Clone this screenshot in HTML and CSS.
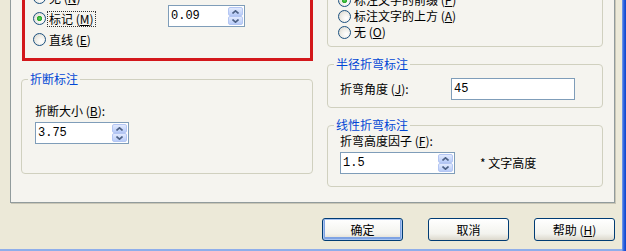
FILE: index.html
```html
<!DOCTYPE html>
<html lang="zh-CN">
<head>
<meta charset="utf-8">
<title>修改标注样式</title>
<link rel="stylesheet" href="styles.css">
</head>
<body>
<div class="window">
  <div class="client">
    <div class="panel">
      <div class="col col-left">
        <div class="redbox">
          <div class="radios">
            <div class="radio-row"><span class="radio"></span><span class="rlabel">无 (<u>N</u>)</span></div>
            <div class="radio-row"><span class="radio checked"></span><span class="rlabel focus">标记 (<u>M</u>)</span></div>
            <div class="radio-row"><span class="radio"></span><span class="rlabel">直线 (<u>E</u>)</span></div>
          </div>
          <div class="spin spin-mark">
            <span class="val">0.09</span>
            <span class="arrows">
              <span class="arr"><svg width="7" height="4" viewBox="0 0 7 4"><path d="M0.5 3.5 L3.5 0.8 L6.5 3.5" fill="none" stroke="#4D6185" stroke-width="1.6"/></svg></span>
              <span class="arr"><svg width="7" height="4" viewBox="0 0 7 4"><path d="M0.5 0.5 L3.5 3.2 L6.5 0.5" fill="none" stroke="#4D6185" stroke-width="1.6"/></svg></span>
            </span>
          </div>
        </div>
        <fieldset class="group group-break">
          <legend>折断标注</legend>
          <div class="gbody gbody-break">
            <div class="label">折断大小 (<u>B</u>):</div>
            <div class="spin spin-break">
              <span class="val">3.75</span>
              <span class="arrows">
                <span class="arr"><svg width="7" height="4" viewBox="0 0 7 4"><path d="M0.5 3.5 L3.5 0.8 L6.5 3.5" fill="none" stroke="#4D6185" stroke-width="1.6"/></svg></span>
                <span class="arr"><svg width="7" height="4" viewBox="0 0 7 4"><path d="M0.5 0.5 L3.5 3.2 L6.5 0.5" fill="none" stroke="#4D6185" stroke-width="1.6"/></svg></span>
              </span>
            </div>
          </div>
        </fieldset>
      </div>
      <div class="col col-right">
        <fieldset class="group group-arc">
          <legend>弧长符号</legend>
          <div class="gbody gbody-arc">
            <div class="radio-row small"><span class="radio checked"></span><span class="rlabel">标注文字的前缀 (<u>P</u>)</span></div>
            <div class="radio-row small"><span class="radio"></span><span class="rlabel">标注文字的上方 (<u>A</u>)</span></div>
            <div class="radio-row small"><span class="radio"></span><span class="rlabel">无 (<u>O</u>)</span></div>
          </div>
        </fieldset>
        <fieldset class="group group-radius">
          <legend>半径折弯标注</legend>
          <div class="gbody gbody-radius">
            <div class="label label-angle">折弯角度 (<u>J</u>):</div>
            <div class="textbox">45</div>
          </div>
        </fieldset>
        <fieldset class="group group-linear">
          <legend>线性折弯标注</legend>
          <div class="gbody gbody-linear">
            <div class="label">折弯高度因子 (<u>F</u>):</div>
            <div class="linear-row">
              <div class="spin spin-linear">
                <span class="val">1.5</span>
                <span class="arrows">
                  <span class="arr"><svg width="7" height="4" viewBox="0 0 7 4"><path d="M0.5 3.5 L3.5 0.8 L6.5 3.5" fill="none" stroke="#4D6185" stroke-width="1.6"/></svg></span>
                  <span class="arr"><svg width="7" height="4" viewBox="0 0 7 4"><path d="M0.5 0.5 L3.5 3.2 L6.5 0.5" fill="none" stroke="#4D6185" stroke-width="1.6"/></svg></span>
                </span>
              </div>
              <span class="unit">* 文字高度</span>
            </div>
          </div>
        </fieldset>
      </div>
    </div>
    <div class="buttons">
      <button class="btn default">确定</button>
      <button class="btn">取消</button>
      <button class="btn">帮助 (<u>H</u>)</button>
    </div>
  </div>
  <div class="frame-right"></div>
</div>
</body>
</html>
```

FILE: styles.css
```css
* { box-sizing: border-box; }
html, body { margin: 0; padding: 0; }
body {
  width: 626px;
  height: 251px;
  overflow: hidden;
  background: #ECE9D8;
  font-family: "Noto Sans CJK SC", "Liberation Sans", sans-serif;
  font-size: 12px;
  line-height: 14px;
  color: #000;
}
u { text-decoration: underline; text-underline-offset: 1px; }

.window { display: flex; width: 626px; height: 251px; }
.client {
  flex: 1;
  display: flex;
  flex-direction: column;
  border-bottom: 2px solid #8FAEEA;
}
.frame-right {
  width: 4px;
  background: linear-gradient(to right, #7EA2EC, #2E63DE 45%, #0A44CC);
}

.panel {
  margin: -40px 0 0 10px;
  width: 605px;
  height: 243px;
  flex: none;
  background: #F5F4EF;
  border: 1px solid #919B9C;
  box-shadow: 1px 1px 0 #C9C6B6;
  display: flex;
  align-items: flex-start;
  gap: 14px;
  padding: 9px 11px 0 10px;
}
.col { display: flex; flex-direction: column; }
.col-left { width: 292px; }
.col-right { width: 276px; margin-top: 2px; }

.redbox {
  margin-left: 1px;
  border: 3px solid #D3171B;
  padding: 14px 0 8px 8px;
  display: flex;
  align-items: flex-start;
}
.radios { width: 135px; display: flex; flex-direction: column; }
.radio-row { display: flex; align-items: center; height: 21px; gap: 1px; }
.radio-row.small { height: 16px; }
.radio {
  width: 13px;
  height: 13px;
  flex: none;
  border-radius: 50%;
  border: 1px solid #1C5180;
  background: radial-gradient(circle at 65% 65%, #FFFFFF 0%, #F0EFEA 45%, #D4D2C8 100%);
}
.radio.checked {
  background:
    radial-gradient(circle at 50% 50%, #5BD35A 0, #2AA72A 2.2px, transparent 3px),
    radial-gradient(circle at 65% 65%, #FFFFFF 0%, #F0EFEA 45%, #D4D2C8 100%);
}
.rlabel { padding: 0 1px; border: 1px dotted transparent; white-space: pre; }
.rlabel.focus { border-color: #333; }

.spin {
  display: flex;
  align-items: stretch;
  height: 22px;
  border: 1px solid #7F9DB9;
  background: #fff;
  padding: 1px;
}
.val {
  flex: 1;
  padding-left: 1px;
  font-family: "Liberation Mono", "DejaVu Sans Mono", monospace;
  font-size: 12px;
  line-height: 18px;
}
.arrows { display: flex; flex-direction: column; width: 15px; gap: 0; }
.arr {
  flex: 1;
  display: flex;
  align-items: center;
  justify-content: center;
  background: linear-gradient(#E2EAFE, #B9CCF8);
  border: 1px solid #B4C6F3;
  border-radius: 2px;
}
.spin-mark { width: 77px; margin-top: 18px; }
.spin-break { width: 94px; margin-top: 4px; }
.spin-linear { width: 115px; }

.group {
  margin: 0;
  padding: 0;
  min-width: 0;
  border: 1px solid #D0D0BF;
  border-radius: 4px;
}
.group legend {
  padding: 0 2px;
  margin-left: 6px;
  color: #0046D5;
  line-height: 14px;
}
.group-break { margin-top: 11px; }
.gbody-break { padding: 18px 13px 29px; }
.label { white-space: pre; }

.gbody-arc { padding: 6px 10px 6px; display: flex; flex-direction: column; }

.group-radius { margin-top: 10px; }
.gbody-radius { padding: 7px 12px 7px; display: flex; align-items: center; }
.label-angle { width: 111px; }
.textbox {
  width: 124px;
  height: 22px;
  border: 1px solid #7F9DB9;
  background: #fff;
  padding: 3px 2px;
  font-family: "Liberation Mono", "DejaVu Sans Mono", monospace;
  line-height: 14px;
}

.group-linear { margin-top: 10px; }
.gbody-linear { padding: 2px 12px 12px; }
.linear-row { display: flex; align-items: center; gap: 25px; margin-top: 4px; }
.unit { white-space: pre; }

.buttons {
  display: flex;
  justify-content: flex-end;
  gap: 25px;
  margin-top: 15px;
  padding-right: 7px;
}
.btn {
  width: 81px;
  height: 23px;
  border: 1px solid #003C74;
  border-radius: 3px;
  background: linear-gradient(#FFFFFF, #F3F3EE 70%, #DCD8CC);
  font-family: "Noto Sans CJK SC", "Liberation Sans", sans-serif;
  font-size: 12px;
  line-height: 14px;
  color: #000;
  padding: 0;
}
.btn.default {
  box-shadow: inset 0 0 0 1px #A9C4F0, inset 0 -1px 0 2px #7FA3E3;
}
```
